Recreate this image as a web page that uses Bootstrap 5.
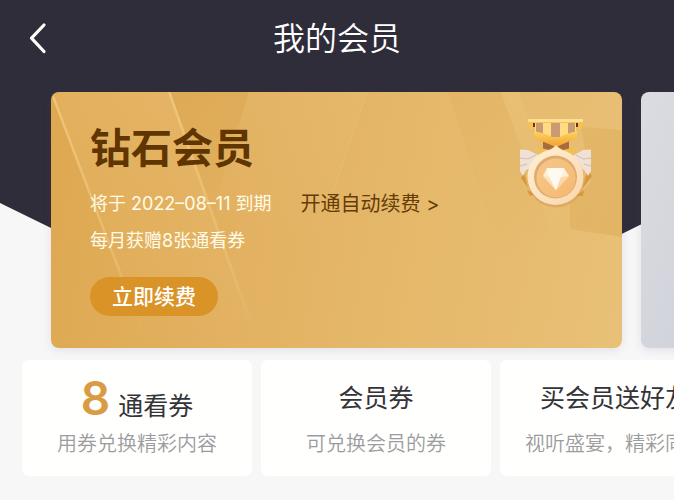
<!DOCTYPE html>
<html lang="zh-CN">
<head>
<meta charset="utf-8">
<meta name="viewport" content="width=device-width, initial-scale=1">
<title>我的会员</title>
<link href="https://cdn.jsdelivr.net/npm/bootstrap@5.3.0/dist/css/bootstrap.min.css" rel="stylesheet">
<style>
  body {
    background: #f7f7f8;
    font-family: Inter, "Noto Sans CJK SC", sans-serif;
    overflow-x: hidden;
  }
  .hero { isolation: isolate; }
  /* dark backdrop that tapers behind the cards */
  .hero::before {
    content: "";
    position: absolute;
    inset: 0;
    z-index: -1;
    background: #302d3b;
    clip-path: polygon(0 0, 100% 0, 100% 208px, 80% 275px, 20% 269px, 0 203px);
  }
  .topbar { height: 76px; padding: 2px 26px 0; }
  .topbar-side { width: 24px; }
  .topbar-title { font-size: 32px; line-height: 40px; font-weight: 350; color: #fff; }
  .tiers { gap: 19px; padding: 16px 0 12px 51px; }
  .tier { flex: 0 0 571px; border-radius: 8px; box-shadow: 0 2px 10px rgba(70, 70, 90, .12); }
  .tier-gold { background: linear-gradient(100deg, #dea850 0%, #e2b161 35%, #e6b96b 65%, #e8c077 100%); padding: 31px 39px 32px; }
  .tier-silver { background: linear-gradient(110deg, #dbdce1, #d0d2da 22%); }
  .facets { inset: 0; z-index: 0; border-radius: 8px; }
  .medal { right: 28px; top: 24px; width: 76px; height: 96px; }
  .tier-name { font-size: 41px; line-height: 50px; font-weight: 600; color: #5f3502; margin: 0 0 19px; }
  .tier-line { font-size: 18px; line-height: 24px; color: #fffbe9; }
  .auto-renew { font-size: 20px; line-height: 24px; color: #643c08; margin-left: 29px; }
  .perk-line { margin: 13px 0 24px; }
  .btn-renew {
    --bs-btn-bg: #da9327; --bs-btn-color: #fff;
    --bs-btn-hover-bg: #c98420; --bs-btn-hover-color: #fff;
    --bs-btn-border-width: 0;
    --bs-btn-padding-x: 22px; --bs-btn-padding-y: 0;
    --bs-btn-font-size: 21px; --bs-btn-font-weight: 500; --bs-btn-line-height: 39px;
  }
  .perks { gap: 9px; padding: 0 0 24px 22px; }
  .perk { flex: 0 0 230px; height: 116px; border-radius: 7px; background: #fffffe; padding-top: 16px; }
  .perk-head { font-size: 25px; line-height: 44px; height: 44px; font-weight: 400; color: #333338; margin: 0; }
  .perk-count { font-size: 46px; line-height: 44px; font-weight: 600; color: #d99b43; }
  .perk-note { font-size: 20px; line-height: 24px; font-weight: 350; color: #9c9c9f; margin: 12px 0 0; }
</style>
<script src="https://cdn.jsdelivr.net/npm/bootstrap@5.3.0/dist/js/bootstrap.bundle.min.js"></script>
</head>
<body>
<div class="hero position-relative">
  <header class="topbar d-flex align-items-center justify-content-between">
    <button type="button" class="topbar-side btn p-0 border-0 d-flex" aria-label="返回">
      <svg width="24" height="34" viewBox="0 0 24 34" fill="none" stroke="#fffefa" stroke-width="3.2" stroke-linecap="round" stroke-linejoin="round" aria-hidden="true"><path d="M18 3 5.500 16.200 18 29.500"/></svg>
    </button>
    <h1 class="topbar-title m-0">我的会员</h1>
    <span class="topbar-side"></span>
  </header>

  <section class="tiers d-flex overflow-hidden">
    <article class="tier tier-gold position-relative">
      <svg class="facets position-absolute w-100 h-100" viewBox="0 0 571 256" preserveAspectRatio="none" aria-hidden="true">
        <defs>
          <linearGradient id="ray" x1="0" y1="0" x2="0" y2="1"><stop offset="0" stop-color="#f4d18c" stop-opacity=".7"/><stop offset=".7" stop-color="#f4d18c" stop-opacity=".3"/><stop offset="1" stop-color="#f4d18c" stop-opacity="0"/></linearGradient>
          <linearGradient id="lite" x1="0" y1="0" x2="0" y2="1"><stop offset="0" stop-color="#f0cb85" stop-opacity=".25"/><stop offset="1" stop-color="#f0cb85" stop-opacity="0"/></linearGradient>
          <linearGradient id="shade" x1="0" y1="0" x2="0" y2="1"><stop offset="0" stop-color="#d39a3e" stop-opacity=".18"/><stop offset="1" stop-color="#d39a3e" stop-opacity="0"/></linearGradient>
          <linearGradient id="cast" x1="0" y1="0" x2="1" y2="1"><stop offset="0" stop-color="#d9a34a" stop-opacity=".25"/><stop offset="1" stop-color="#d9a34a" stop-opacity=".4"/></linearGradient>
        </defs>
        <path d="M0 0H118L203 245H92Z" fill="url(#lite)"/>
        <path d="M118 0H198L164 110 160 118Z" fill="url(#shade)"/>
        <path d="M198 0H316L262 160 164 110Z" fill="url(#lite)" opacity=".5"/>
        <path d="M397 0H450L500 140 455 180Z" fill="url(#shade)" opacity=".7"/>
        <path d="M450 0H468L510 120 500 140Z" fill="url(#lite)"/>
        <path d="M1 5 3 4 95 245H92Z" fill="url(#ray)"/>
        <path d="M117 0H119.500L206 245H203Z" fill="url(#ray)"/>
        <path d="M316 0 282 100" stroke="#efcc88" stroke-opacity=".3"/>
        <path d="M530 35 571 38V145L519 137V112L540 90Z" fill="url(#cast)"/>
      </svg>
      <svg class="medal position-absolute" viewBox="0 0 76 96" aria-hidden="true">
        <defs>
          <linearGradient id="rim" x1="0" y1="0" x2="1" y2="1"><stop offset="0" stop-color="#fff0d5"/><stop offset="1" stop-color="#f9d6ac"/></linearGradient>
          <linearGradient id="disc" x1="0" y1="0" x2="1" y2="1"><stop offset="0" stop-color="#f5c78a"/><stop offset="1" stop-color="#f6b971"/></linearGradient>
          <linearGradient id="vee" x1="0" y1="0" x2="0" y2="1"><stop offset="0" stop-color="#ffd460"/><stop offset="1" stop-color="#f2a132"/></linearGradient>
        </defs>
        <!-- wings -->
        <path d="M6 56 3 62 10 72ZM69 54 74 60 65 72ZM9 74 12 80 18 78ZM66 74 65 80 58 80Z" fill="#d8973d"/>
        <path d="M2 33.500 10 34 20 39V50L8 54 5 60 2 55Z" fill="#f0e1d5"/>
        <path d="M73 33.500 65 34 56 39V50L66 54 70 60 73 55Z" fill="#f0e1d5"/>
        <path d="M2 42 10 43 18 39M2 50 9 48M73 42 65 43 58 39M73 50 66 48" fill="none" stroke="#d4bdb5"/>
        <!-- ribbon -->
        <path d="M25 24 38 31 34 37H25ZM51 24 38 31 42 37H51Z" fill="#a96b3d"/>
        <path d="M10 3H65L64 13H11Z" fill="#f9c151"/>
        <path d="M10 3H65V6H10Z" fill="#ffdf92"/>
        <path d="M15 7H60V11H15Z" fill="#5b3817"/>
        <path d="M17 7H58V22H17Z" fill="#ffdc82"/>
        <path d="M18 7H25V18H18ZM33 7H42V22H33ZM50 7H57V18H50Z" fill="#c99a74"/>
        <path d="M16 15 28 18 34 21H42L48 18 59 15V22L38 31 16 22Z" fill="url(#vee)"/>
        <path d="M19 31 31 34 38 30 45 34 58 31 54 43H23Z" fill="#f1be50"/>
        <path d="M32 35 38 29 44 35V38H32Z" fill="#ffe5c6"/>
        <!-- coin -->
        <circle cx="38" cy="63" r="28.500" fill="#cf9143" opacity=".4"/>
        <circle cx="37.500" cy="61" r="28" fill="url(#rim)"/>
        <circle cx="37.500" cy="61" r="21.500" fill="#dfac70"/>
        <circle cx="38" cy="62" r="19.500" fill="url(#disc)"/>
        <path d="M29 52H46L51 60 38 74 25 60Z" fill="#fff1d7"/>
        <path d="M29 52H46L43 61 38 74 31 61Z" fill="#fffaf0"/>
        <path d="M43 61 51 60 38 74Z" fill="#f9d9ad"/>
        <path d="M25 60 31 61 38 74Z" fill="#fbe2bd"/>
      </svg>
      <div class="position-relative">
        <h2 class="tier-name">钻石会员</h2>
        <div class="d-flex align-items-center text-nowrap">
          <span class="tier-line">将于 2022–08–11 到期</span>
          <a href="#" class="auto-renew text-decoration-none">开通自动续费 &gt;</a>
        </div>
        <p class="tier-line perk-line">每月获赠8张通看券</p>
        <button type="button" class="btn btn-renew rounded-pill d-block">立即续费</button>
      </div>
    </article>
    <article class="tier tier-silver" aria-label="会员"></article>
  </section>
</div>

<section class="perks d-flex overflow-hidden text-center text-nowrap">
  <article class="perk">
    <h3 class="perk-head d-flex justify-content-center align-items-baseline gap-2"><span class="perk-count">8</span>通看券</h3>
    <p class="perk-note">用券兑换精彩内容</p>
  </article>
  <article class="perk">
    <h3 class="perk-head">会员券</h3>
    <p class="perk-note">可兑换会员的券</p>
  </article>
  <article class="perk">
    <h3 class="perk-head">买会员送好友</h3>
    <p class="perk-note">视听盛宴，精彩同享</p>
  </article>
</section>
</body>
</html>
